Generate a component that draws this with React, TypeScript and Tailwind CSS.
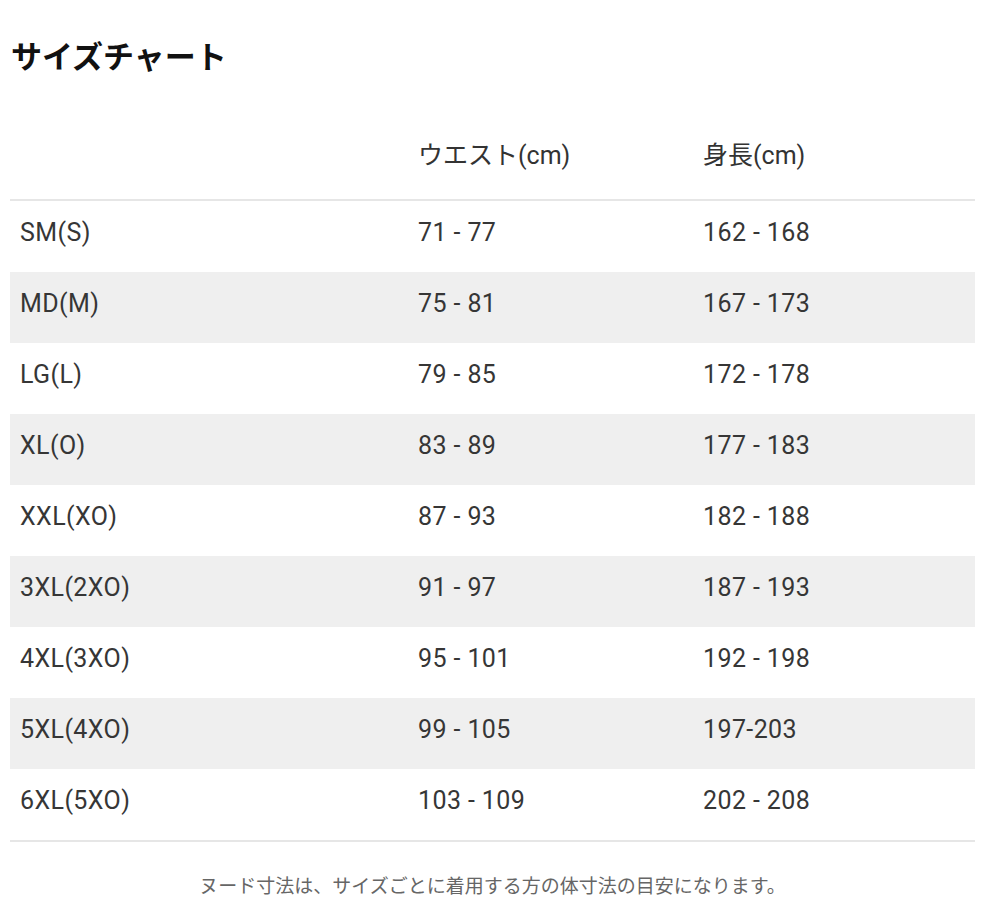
import React from "react";

const rows: [string, string, string][] = [
  ["SM(S)", "71 - 77", "162 - 168"],
  ["MD(M)", "75 - 81", "167 - 173"],
  ["LG(L)", "79 - 85", "172 - 178"],
  ["XL(O)", "83 - 89", "177 - 183"],
  ["XXL(XO)", "87 - 93", "182 - 188"],
  ["3XL(2XO)", "91 - 97", "187 - 193"],
  ["4XL(3XO)", "95 - 101", "192 - 198"],
  ["5XL(4XO)", "99 - 105", "197-203"],
  ["6XL(5XO)", "103 - 109", "202 - 208"],
];

export default function App() {
  return (
    <div
      className="w-[1000px] h-[913px] bg-white pl-[10px] overflow-hidden"
      style={{ fontFamily: 'Roboto, "Noto Sans CJK JP", sans-serif' }}
    >
      <div className="w-[965px]">
        <h1 className="pt-[38px] h-[78px] pl-[1px] text-[31px] leading-[40px] font-bold text-[#111]">
          サイズチャート
        </h1>
        <div className="grid grid-cols-[398px_285px_1fr] h-[123px] items-end pb-[27px] text-[25px] leading-[32px] text-[#333] border-b-2 border-[#e6e6e6]">
          <div className="pl-[10px]"></div>
          <div className="pl-[10px]">ウエスト(cm)</div>
          <div className="pl-[10px]">身長(cm)</div>
        </div>
        {rows.map((r, i) => (
          <div
            key={r[0]}
            className={
              "grid grid-cols-[398px_285px_1fr] h-[71px] items-center text-[25px] leading-[32px] tracking-[0.4px] text-[#363636] " +
              (i % 2 === 1 ? "bg-[#efefef]" : "bg-white")
            }
          >
            <div className="pl-[10px] pb-[7px]">{r[0]}</div>
            <div className="pl-[10px] pb-[7px]">{r[1]}</div>
            <div className="pl-[10px] pb-[7px]">{r[2]}</div>
          </div>
        ))}
        <div className="border-t-2 border-[#e6e6e6]"></div>
        <p className="mt-[33px] text-center text-[19px] leading-[24px] text-[#666]">
          ヌード寸法は、サイズごとに着用する方の体寸法の目安になります。
        </p>
      </div>
    </div>
  );
}
